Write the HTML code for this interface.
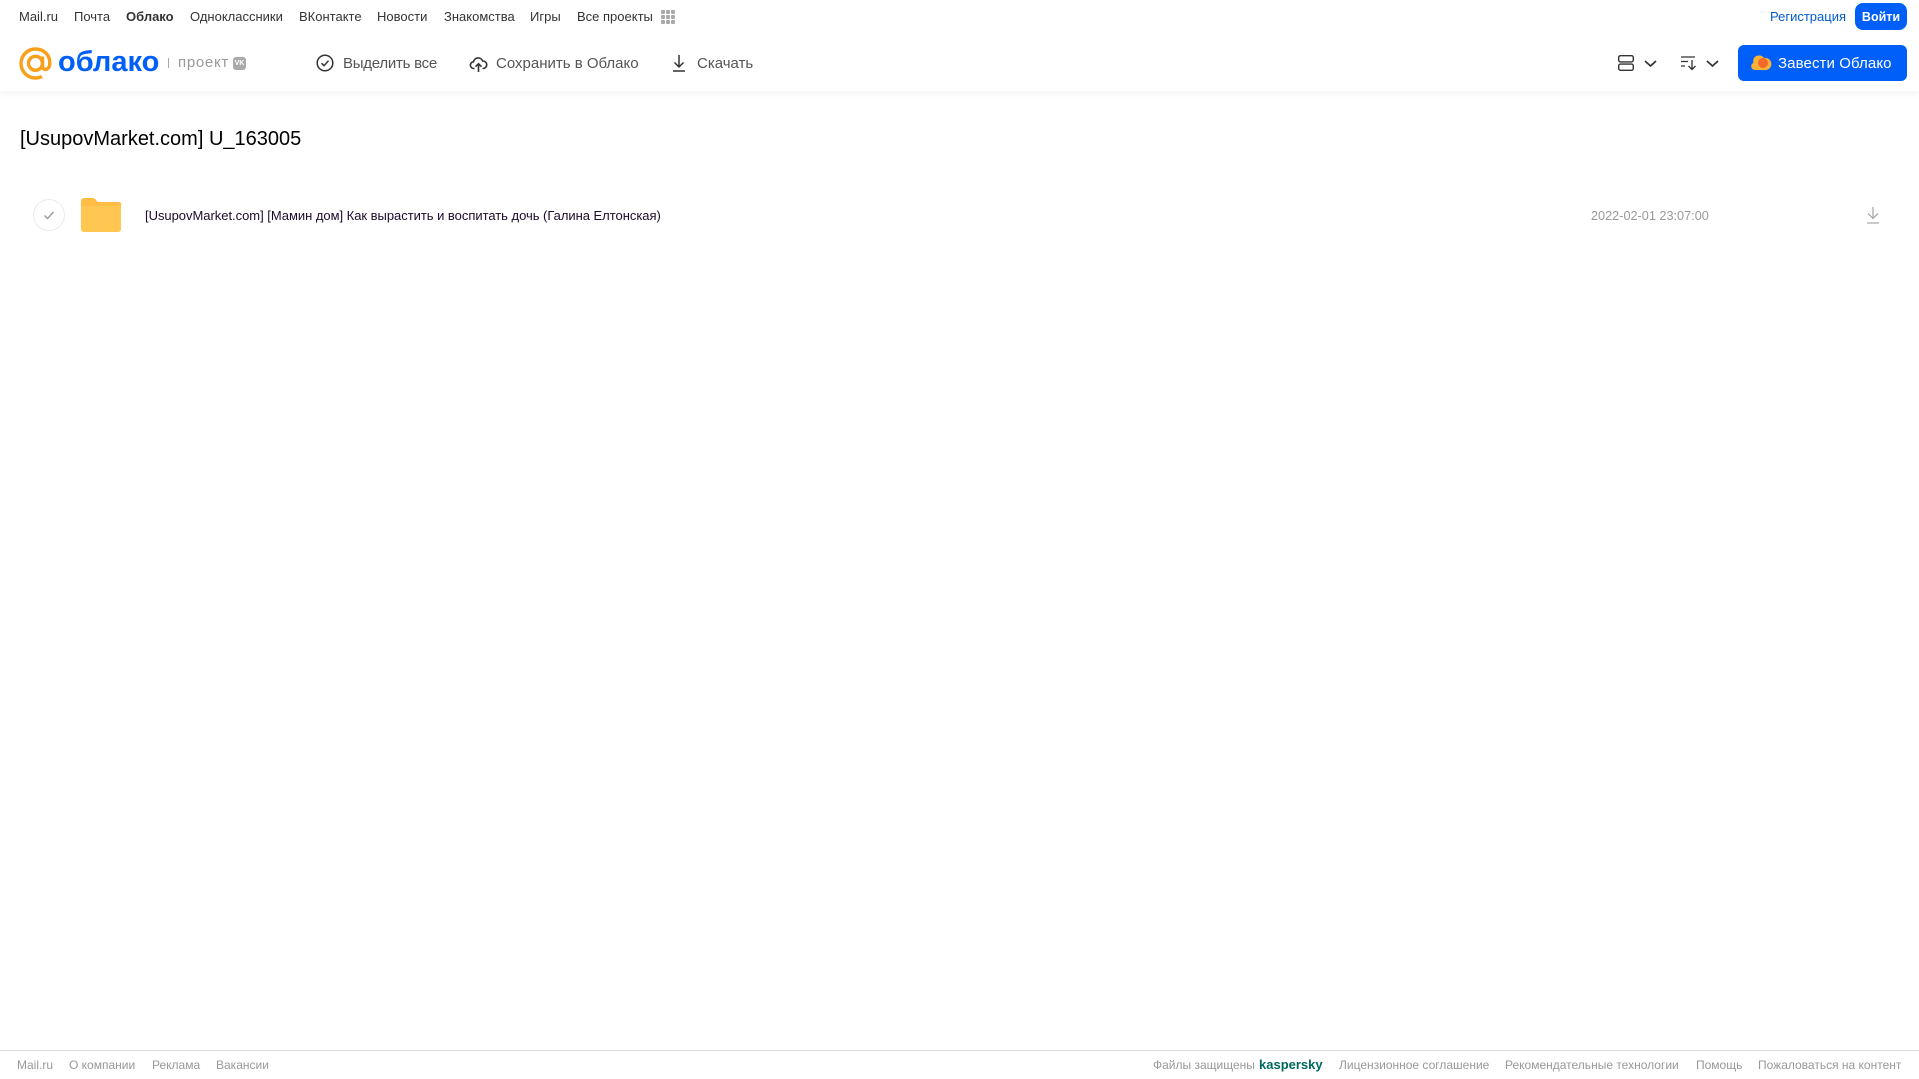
<!DOCTYPE html>
<html lang="ru"><head><meta charset="utf-8"><title>Облако</title>
<style>
html,body{margin:0;padding:0;background:#fff;width:1919px;height:1079px;overflow:hidden}
body{position:relative;font-family:"Liberation Sans",sans-serif}
.t{position:absolute;white-space:nowrap;line-height:20px}
.n{top:7px;font-size:13px;color:#333}
.b{top:53px;font-size:15px;color:#555}
.f{top:1055px;font-size:12px;color:#999}
svg{position:absolute;overflow:visible}
</style></head><body>
<div style="position:absolute;left:0;top:0;width:1919px;height:91px;background:#fff;box-shadow:0 1px 8px rgba(0,0,0,.07)"></div>

<span class="t n" style="left:19px">Mail.ru</span>
<span class="t n" style="left:74px">Почта</span>
<span class="t n" style="left:126px;font-weight:bold">Облако</span>
<span class="t n" style="left:190px">Одноклассники</span>
<span class="t n" style="left:299px">ВКонтакте</span>
<span class="t n" style="left:377px">Новости</span>
<span class="t n" style="left:444px">Знакомства</span>
<span class="t n" style="left:530px">Игры</span>
<span class="t n" style="left:577px">Все проекты</span>
<svg style="left:661px;top:10px" width="14" height="14" fill="#aaa"><rect width="4" height="4" rx="1"/><rect x="5" width="4" height="4" rx="1"/><rect x="10" width="4" height="4" rx="1"/><rect y="5" width="4" height="4" rx="1"/><rect x="5" y="5" width="4" height="4" rx="1"/><rect x="10" y="5" width="4" height="4" rx="1"/><rect y="10" width="4" height="4" rx="1"/><rect x="5" y="10" width="4" height="4" rx="1"/><rect x="10" y="10" width="4" height="4" rx="1"/></svg>

<span class="t" style="left:1770px;top:7px;font-size:13px;color:#005bd1">Регистрация</span>
<div class="t" style="left:1855px;top:3px;width:52px;height:27px;line-height:28px;border-radius:8px;background:#005ff9;color:#fff;font-size:12.5px;font-weight:bold;text-align:center">Войти</div>

<svg style="left:19px;top:47px" width="33" height="33" viewBox="0 0 33 33" fill="none" stroke="#f9a01b" stroke-width="3.4"><circle cx="16.5" cy="16.3" r="7"/><path d="M23.5 9.5v9.5c0 5 7 5 7.300-2.700C31 7.500 24.500 2 16.500 2 8.500 2 2 8.500 2 16.500S8.500 31 16.500 31c2.500 0 4.500-.5 6.500-1.500"/></svg>
<span class="t" style="left:58px;top:46px;line-height:32px;font-size:29px;font-weight:bold;color:#005ff9">облако</span>
<div style="position:absolute;left:168px;top:58px;width:1px;height:10px;background:#aaa"></div>
<span class="t" style="left:178px;top:53px;font-size:15px;color:#999;letter-spacing:.7px">проект</span>
<div class="t" style="left:233px;top:57px;width:13px;height:13px;border-radius:3px;background:#aaa;color:#fff;font-size:7px;line-height:13px;text-align:center;font-weight:bold">VK</div>

<svg style="left:316px;top:54px" width="18" height="18" fill="none" stroke="#333" stroke-width="1.500"><circle cx="9" cy="9" r="7.800"/><path d="M5.500 9.200l2.500 2.500 4.500-5"/></svg>
<span class="t b" style="left:343px;top:54px;letter-spacing:-.25px">Выделить все</span>
<svg style="left:470px;top:56px" width="17" height="16" fill="none" stroke="#333" stroke-width="1.600"><path d="M4.500 12.500H4A3.300 3.300 0 0 1 3.500 5.800 4.800 4.800 0 0 1 12.700 5a3.600 3.600 0 0 1 .5 7.500h-.7"/><path d="M8.500 16V8M5.500 10.700l3-3 3 3"/></svg>
<span class="t b" style="left:496px;top:54px">Сохранить в Облако</span>
<svg style="left:671px;top:54px" width="16" height="18" fill="none" stroke="#333" stroke-width="1.500"><path d="M8 1v12M3.500 8.500L8 13l4.500-4.500M2 17h12"/></svg>
<span class="t b" style="left:697px;top:54px">Скачать</span>

<svg style="left:1618px;top:55px" width="16" height="16" fill="none" stroke="#333" stroke-width="1.400"><rect x=".7" y=".7" width="14.600" height="6.200" rx="1.800"/><rect x=".7" y="9.100" width="14.600" height="6.200" rx="1.800"/></svg>
<svg style="left:1644px;top:60px" width="13" height="7" fill="none" stroke="#333" stroke-width="1.700"><path d="M1 1l5.500 5L12 1"/></svg>
<svg style="left:1681px;top:56px" width="16" height="14" fill="none" stroke="#333" stroke-width="1.300"><path d="M0 1h14M0 5.500h7M0 10h4M11 4v9.500M7.500 10L11 13.500l3.500-3.500"/></svg>
<svg style="left:1706px;top:60px" width="13" height="7" fill="none" stroke="#333" stroke-width="1.700"><path d="M1 1l5.500 5L12 1"/></svg>
<div style="position:absolute;left:1738px;top:45px;width:169px;height:36px;border-radius:6px;background:#005ff9"></div>
<svg style="left:1751px;top:55px" width="19" height="15"><path d="M4 15a3.800 3.800 0 0 1-1.500-7.300A5.500 5.500 0 0 1 8.500.500c2 0 3.500 1 4.500 2.500a6 6 0 0 1 2.500 12z" fill="#f9b233"/><circle cx="12" cy="8" r="5" fill="#f2692a"/></svg>
<span class="t" style="left:1778px;top:54px;font-size:15px;color:#fff;letter-spacing:.1px">Завести Облако</span>

<div class="t" style="left:20px;top:126px;line-height:26px;font-size:20px;color:#000">[UsupovMarket.com] U_163005</div>

<svg style="left:33px;top:199px" width="32" height="32" fill="none"><circle cx="16" cy="16" r="15.500" stroke="#ebebeb"/><path d="M11.500 16.500l3 3 6-6.500" stroke="#999" stroke-width="1.300"/></svg>
<svg style="left:81px;top:198px" width="40" height="34"><path d="M0 3a3 3 0 0 1 3-3h8c2.500 0 3.500 1 4.500 2.500.5.800 1 1.500 2 1.500H38a2 2 0 0 1 2 2v25a3 3 0 0 1-3 3H3a3 3 0 0 1-3-3z" fill="#ffbd45"/><path d="M0 9a1 1 0 0 1 1-1h38a1 1 0 0 1 1 1v22a3 3 0 0 1-3 3H3a3 3 0 0 1-3-3z" fill="#ffc652"/></svg>
<span class="t" style="left:145px;top:206px;font-size:13px;letter-spacing:-.03px;color:#1d0a2b">[UsupovMarket.com] [Мамин дом] Как вырастить и воспитать дочь (Галина Елтонская)</span>
<span class="t" style="left:1591px;top:206px;font-size:12.700px;color:#999">2022-02-01 23:07:00</span>
<svg style="left:1866px;top:207px" width="14" height="17" fill="none" stroke="#aaa" stroke-width="1.300"><path d="M7 0v11M2 6.500L7 11.500l5-5M1 16h12"/></svg>

<div style="position:absolute;left:0;top:1050px;width:1919px;height:1px;background:#d9d9d9"></div>
<span class="t f" style="left:17px">Mail.ru</span>
<span class="t f" style="left:69px">О компании</span>
<span class="t f" style="left:152px">Реклама</span>
<span class="t f" style="left:216px">Вакансии</span>
<span class="t f" style="left:1153px">Файлы защищены</span>
<span class="t f" style="left:1259px;font-size:13px;font-weight:bold;color:#00695c">kaspersky</span>
<span class="t f" style="left:1339px">Лицензионное соглашение</span>
<span class="t f" style="left:1505px">Рекомендательные технологии</span>
<span class="t f" style="left:1696px">Помощь</span>
<span class="t f" style="left:1758px">Пожаловаться на контент</span>
</body></html>
